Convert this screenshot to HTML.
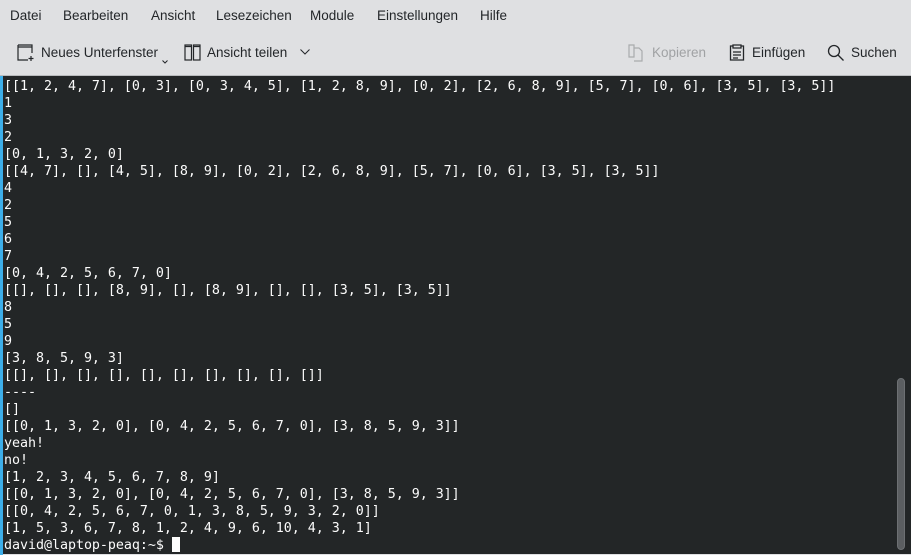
<!DOCTYPE html>
<html><head><meta charset="utf-8"><style>
*{margin:0;padding:0;box-sizing:border-box}
body{width:911px;height:554px;overflow:hidden;background:#dfe0e2;font-family:"Liberation Sans","DejaVu Sans",sans-serif;position:relative}
.menu{position:absolute;top:0;left:0;height:32px;width:911px;font-size:13.5px;color:#232629}
.menu span{position:absolute;top:8px}
.tb{position:absolute;top:32px;height:43px;width:911px;font-size:13.5px;color:#232629}
.tb span{position:absolute;top:13px}
.term{position:absolute;top:75px;left:0;width:911px;height:479px;background:#232627;border-top:1px solid #b9bbbd}
.strip{position:absolute;left:0;top:0;width:3px;height:479px;background:#3daee9}
pre{position:absolute;left:4px;top:2px;font-family:"DejaVu Sans Mono","Liberation Mono",monospace;font-size:13.33px;letter-spacing:-0.03px;line-height:17px;color:#fcfcfc}
.cur{display:inline-block;width:8px;height:15px;background:#fcfcfc;vertical-align:-3px}
.sb{position:absolute;left:897px;top:302px;width:8px;height:172px;border-radius:4px;background:#5b5e61;border:1px solid #6d7073}
svg{position:absolute}
</style></head><body>
<div class="menu">
<span style="left:10px">Datei</span><span style="left:63px">Bearbeiten</span><span style="left:151px">Ansicht</span><span style="left:216px">Lesezeichen</span><span style="left:310px">Module</span><span style="left:377px">Einstellungen</span><span style="left:480px">Hilfe</span>
</div>
<div class="tb">
<svg style="left:17px;top:12px" width="18" height="18" viewBox="0 0 18 18" fill="none" stroke="#232629" stroke-width="1.2"><path d="M1 1h14v8M1 1v15h10M1 3h14"/><path d="M14 12v5M11.5 14.5h5"/></svg>
<span style="left:41px">Neues Unterfenster</span>
<svg style="left:162px;top:28px" width="6" height="4"><path d="M0.5 0.5l2.5 2.5 2.5-2.5" stroke="#232629" fill="none"/></svg>
<svg style="left:184px;top:12px" width="18" height="18" viewBox="0 0 18 18" fill="none" stroke="#232629" stroke-width="1.2"><rect x="1" y="1" width="6.5" height="15"/><rect x="9.5" y="1" width="6.5" height="15"/><path d="M1 2.5h6.5M9.5 2.5h6.5"/></svg>
<span style="left:207px">Ansicht teilen</span>
<svg style="left:300px;top:17px" width="10" height="6"><path d="M0.5 0.5l4.5 4.5 4.5-4.5" stroke="#232629" fill="none"/></svg>
<svg style="left:628px;top:12px" width="16" height="18" viewBox="0 0 16 18" fill="none" stroke="#a9abad" stroke-width="1.2"><path d="M1 1h5v12H1zM6 4h5l3 3v10H6"/></svg>
<span style="left:652px;color:#a0a2a4">Kopieren</span>
<svg style="left:729px;top:12px" width="16" height="18" viewBox="0 0 16 18" fill="none" stroke="#232629" stroke-width="1.3"><path d="M4 2H1.5v14h13V2H12M4 1h8v3H4z M4 8h8M4 11h8M4 14h5"/></svg>
<span style="left:752px">Einfügen</span>
<svg style="left:827px;top:12px" width="18" height="18" viewBox="0 0 18 18" fill="none" stroke="#232629" stroke-width="1.3"><circle cx="7" cy="7" r="5.5"/><path d="M11 11l5.5 5.5"/></svg>
<span style="left:851px">Suchen</span>
</div>
<div class="term"><div class="strip"></div>
<pre>[[1, 2, 4, 7], [0, 3], [0, 3, 4, 5], [1, 2, 8, 9], [0, 2], [2, 6, 8, 9], [5, 7], [0, 6], [3, 5], [3, 5]]
1
3
2
[0, 1, 3, 2, 0]
[[4, 7], [], [4, 5], [8, 9], [0, 2], [2, 6, 8, 9], [5, 7], [0, 6], [3, 5], [3, 5]]
4
2
5
6
7
[0, 4, 2, 5, 6, 7, 0]
[[], [], [], [8, 9], [], [8, 9], [], [], [3, 5], [3, 5]]
8
5
9
[3, 8, 5, 9, 3]
[[], [], [], [], [], [], [], [], [], []]
----
[]
[[0, 1, 3, 2, 0], [0, 4, 2, 5, 6, 7, 0], [3, 8, 5, 9, 3]]
yeah!
no!
[1, 2, 3, 4, 5, 6, 7, 8, 9]
[[0, 1, 3, 2, 0], [0, 4, 2, 5, 6, 7, 0], [3, 8, 5, 9, 3]]
[[0, 4, 2, 5, 6, 7, 0, 1, 3, 8, 5, 9, 3, 2, 0]]
[1, 5, 3, 6, 7, 8, 1, 2, 4, 9, 6, 10, 4, 3, 1]
david@laptop-peaq:~$ <span class="cur"></span></pre>
<div class="sb"></div>
</div>
</body></html>
